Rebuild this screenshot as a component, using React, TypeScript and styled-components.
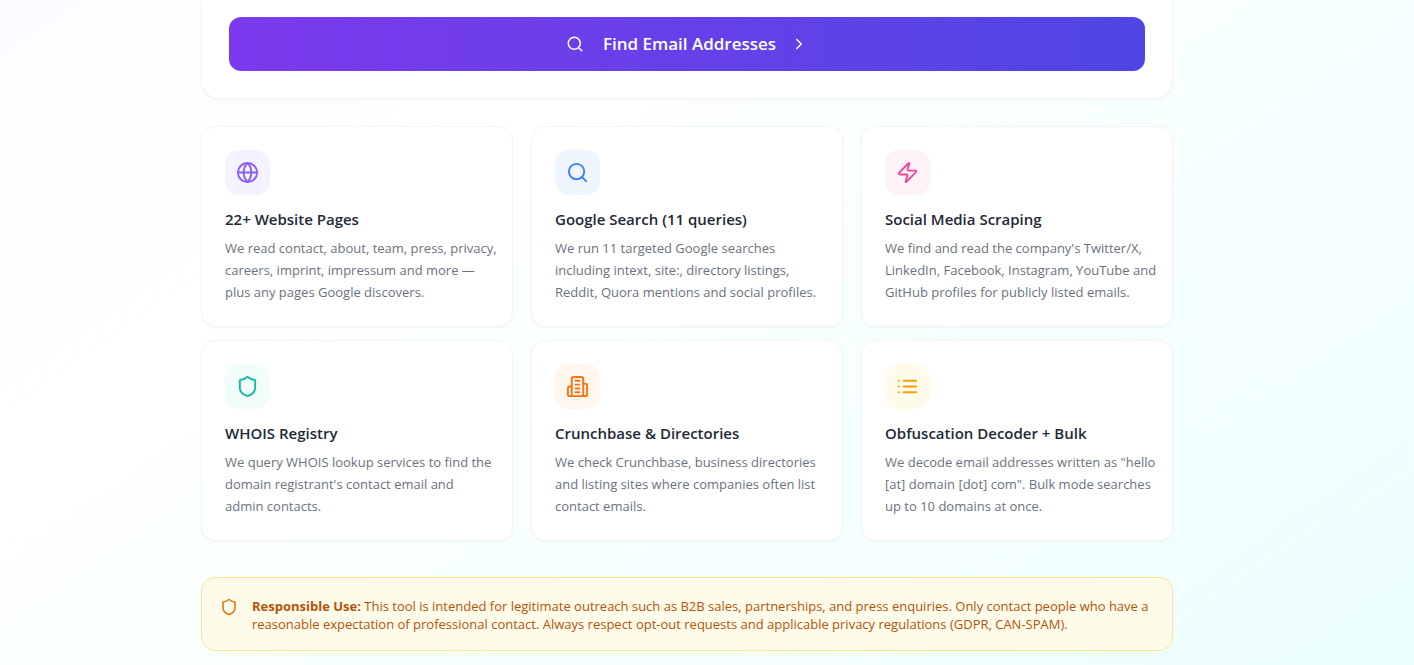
import React from "react";
import styled, { createGlobalStyle } from "styled-components";
import { ChevronRight, Globe, Search, Shield, Zap } from "lucide-react";

const GlobalStyle = createGlobalStyle`
  *, *::before, *::after { box-sizing: border-box; }
  body {
    margin: 0;
    font-family: "Open Sans", "Noto Sans", sans-serif;
    color: #1e2939;
  }
`;

const Page = styled.main`
  min-height: 100vh;
  padding: 0 60px 14px 20px;
  background: linear-gradient(145deg, #fcfbff 0%, #ffffff 28%, #f6ffff 62%, #ecfffe 100%);
`;

const Content = styled.div`
  max-width: 972px;
  margin: 0 auto;
`;

const SearchPanel = styled.form`
  padding: 17px 27px 27px;
  background: #ffffff;
  border: 1px solid #f3f4f6;
  border-top: 0;
  border-radius: 0 0 18px 18px;
  box-shadow: 0 1px 2px rgba(0, 0, 0, 0.05);
`;

const SubmitButton = styled.button`
  display: flex;
  align-items: center;
  justify-content: center;
  gap: 14px;
  width: 100%;
  height: 54px;
  border: 0;
  border-radius: 12px;
  background: linear-gradient(90deg, #7c3aed, #4f46e5);
  color: #ffffff;
  font-family: inherit;
  font-size: 17px;
  font-weight: 600;
  line-height: 24px;
  cursor: pointer;
`;

const ButtonLabel = styled.span`
  padding-left: 5px;
`;

const FeatureGrid = styled.section`
  display: grid;
  grid-template-columns: repeat(3, minmax(0, 1fr));
  gap: 13px 18px;
  margin-top: 27px;

  @media (max-width: 860px) {
    grid-template-columns: 1fr;
  }
`;

const FeatureCard = styled.article`
  padding: 23px 12px 23px 23px;
  background: #ffffff;
  border: 1px solid #f3f4f6;
  border-radius: 14px;
  box-shadow: 0 1px 2px rgba(0, 0, 0, 0.04);
`;

const IconTile = styled.div<{ $color: string; $background: string }>`
  display: flex;
  align-items: center;
  justify-content: center;
  width: 45px;
  height: 45px;
  border-radius: 14px;
  color: ${(p) => p.$color};
  background: ${(p) => p.$background};
`;

const FeatureTitle = styled.h3`
  margin: 12px 0 6px;
  font-size: 15px;
  font-weight: 600;
  line-height: 24px;
  color: #1f2937;
`;

const FeatureText = styled.p`
  margin: 0;
  font-size: 13px;
  line-height: 22px;
  color: #6b7280;
  white-space: pre-line;
`;

const Notice = styled.aside`
  display: flex;
  gap: 14px;
  margin-top: 36px;
  padding: 19px 18px 17px;
  border: 1px solid #fde68a;
  border-radius: 14px;
  background: #fffbeb;
  color: #b45309;
`;

const NoticeIcon = styled(Shield)`
  flex: none;
  margin-top: 1px;
  color: #d97706;
`;

const NoticeText = styled.p`
  margin: 0;
  font-size: 13px;
  line-height: 18px;
`;

const StrokeIcon = styled.svg`
  fill: none;
  stroke: currentColor;
  stroke-width: 2;
  stroke-linecap: round;
  stroke-linejoin: round;
`;

const BuildingIcon = ({ size }: { size: number }) => (
  <StrokeIcon width={size} height={size} viewBox="0 0 24 24" aria-hidden="true">
    <path d="M6 22V4a2 2 0 0 1 2-2h8a2 2 0 0 1 2 2v18Z" />
    <path d="M6 12H4a2 2 0 0 0-2 2v6a2 2 0 0 0 2 2h2" />
    <path d="M18 9h2a2 2 0 0 1 2 2v9a2 2 0 0 1-2 2h-2" />
    <path d="M10 6h4M10 10h4M10 14h4M10 18h4" />
  </StrokeIcon>
);

const ListIcon = ({ size }: { size: number }) => (
  <StrokeIcon width={size} height={size} viewBox="0 0 24 24" aria-hidden="true">
    <path d="M8 6h13M8 12h13M8 18h13" />
    <path d="M3 6h.01M3 12h.01M3 18h.01" />
  </StrokeIcon>
);

const ICON_SIZE = 23;

const features = [
  {
    title: "22+ Website Pages",
    text: "We read contact, about, team, press, privacy,\ncareers, imprint, impressum and more —\nplus any pages Google discovers.",
    icon: Globe,
    color: "#8b5cf6",
    background: "#f5f3ff",
  },
  {
    title: "Google Search (11 queries)",
    text: "We run 11 targeted Google searches\nincluding intext, site:, directory listings,\nReddit, Quora mentions and social profiles.",
    icon: Search,
    color: "#3b82f6",
    background: "#eff6ff",
  },
  {
    title: "Social Media Scraping",
    text: "We find and read the company's Twitter/X,\nLinkedIn, Facebook, Instagram, YouTube and\nGitHub profiles for publicly listed emails.",
    icon: Zap,
    color: "#ec4899",
    background: "#fdf2f8",
  },
  {
    title: "WHOIS Registry",
    text: "We query WHOIS lookup services to find the\ndomain registrant's contact email and\nadmin contacts.",
    icon: Shield,
    color: "#14b8a6",
    background: "#f0fdfa",
  },
  {
    title: "Crunchbase & Directories",
    text: "We check Crunchbase, business directories\nand listing sites where companies often list\ncontact emails.",
    icon: BuildingIcon,
    color: "#f97316",
    background: "#fff7ed",
  },
  {
    title: "Obfuscation Decoder + Bulk",
    text: 'We decode email addresses written as "hello\n[at] domain [dot] com". Bulk mode searches\nup to 10 domains at once.',
    icon: ListIcon,
    color: "#f59e0b",
    background: "#fffbeb",
  },
];

export default function App() {
  return (
    <>
      <GlobalStyle />
      <Page>
        <Content>
          <SearchPanel onSubmit={(e: React.FormEvent) => e.preventDefault()}>
            <SubmitButton type="submit">
              <Search size={18} aria-hidden="true" />
              <ButtonLabel>Find Email Addresses</ButtonLabel>
              <ChevronRight size={18} aria-hidden="true" />
            </SubmitButton>
          </SearchPanel>

          <FeatureGrid>
            {features.map(({ title, text, icon: Icon, color, background }) => (
              <FeatureCard key={title}>
                <IconTile $color={color} $background={background}>
                  <Icon size={ICON_SIZE} />
                </IconTile>
                <FeatureTitle>{title}</FeatureTitle>
                <FeatureText>{text}</FeatureText>
              </FeatureCard>
            ))}
          </FeatureGrid>

          <Notice>
            <NoticeIcon size={18} aria-hidden="true" />
            <NoticeText>
              <strong>Responsible Use:</strong> This tool is intended for legitimate outreach such as B2B sales,
              partnerships, and press enquiries. Only contact people who have a reasonable expectation of professional
              contact. Always respect opt-out requests and applicable privacy regulations (GDPR, CAN-SPAM).
            </NoticeText>
          </Notice>
        </Content>
      </Page>
    </>
  );
}
